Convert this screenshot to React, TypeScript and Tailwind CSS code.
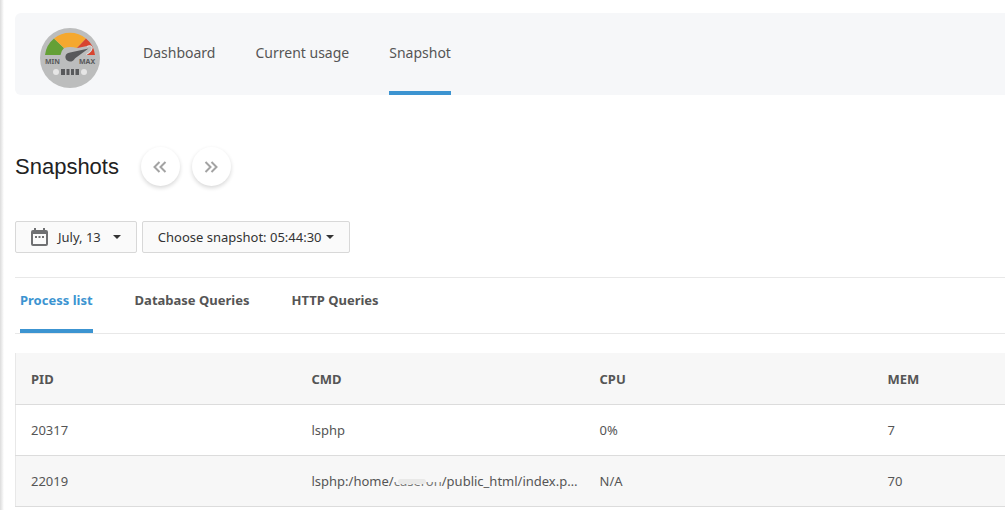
import { useState } from "react";

const NAV_ITEMS = ["Dashboard", "Current usage", "Snapshot"];
const TABS = ["Process list", "Database Queries", "HTTP Queries"];

function Gauge() {
  return (
    <svg className="size-15 shrink-0" viewBox="0 0 60 60">
      <circle cx="30" cy="30" r="30" fill="#bcbdbd" />
      <path d="M5 27A25 25 0 0 1 14 10.5L24 20Q21 23 20.500 27Z" fill="#64a036" />
      <path d="M14 10.500A25 25 0 0 1 46 10.500L37 20Q30 18 24 20Z" fill="#f5a82e" />
      <path d="M46 10.500A25 25 0 0 1 55 27H43L37 20Z" fill="#d8442f" />
      <path
        d="M52.500 20C53 17 50 17 47 18L28 22C22 24 20 29 22 33H37L48 26C51 24 52 23 52.500 20Z"
        fill="#bcbdbd"
      />
      <path d="M47 18.500C50 17 52.500 18 52 20.500S49 25 46 26.500" fill="none" stroke="#e4e0df" />
      <path
        d="M48.500 20.500L29 24.800C26 25.500 25 28 25.500 30C26 33 30 34.500 32.500 33C33.500 32.500 34.500 31 35.500 30Z"
        fill="#58595b"
      />
      <g
        className="font-['Noto_Sans','Open_Sans',sans-serif] font-bold"
        fontSize="7"
        fill="#58595b"
      >
        <text x="5" y="36">
          MIN
        </text>
        <text x="39" y="36">
          MAX
        </text>
      </g>
      <circle cx="16" cy="44" r="3" fill="#e6e6e6" />
      <circle cx="44" cy="44" r="3" fill="#e6e6e6" />
      <path d="M21 41h4v6h-4zM26.500 41h3v6h-3zM31 41h3v6h-3zM35.500 41h3.500v6h-3.500z" fill="#58595b" />
    </svg>
  );
}

function Caret() {
  return (
    <svg className="h-1 w-2" viewBox="0 0 8 4" fill="#333">
      <path d="M0 0h8L4 4z" />
    </svg>
  );
}

function CalendarIcon() {
  return (
    <svg className="h-[18px] w-[17px]" viewBox="0 0 17 18" fill="#6f7072">
      <path
        fillRule="evenodd"
        d="M2 2H3V0H5V2H12V0H14V2H15Q17 2 17 4V16Q17 18 15 18H2Q0 18 0 16V4Q0 2 2 2ZM2 6V16H15V6Z"
      />
      <path d="M4 8h2v2H4zM7.500 8h2v2h-2zM11 8h2v2h-2z" />
    </svg>
  );
}

function RoundButton({ label, path }: { label: string; path: string }) {
  return (
    <button
      type="button"
      aria-label={label}
      className="flex size-[39px] items-center justify-center rounded-full bg-white shadow-[0_2px_4px_rgba(0,0,0,0.16)]"
    >
      <svg
        className="h-3 w-[14px]"
        viewBox="0 0 14 12"
        fill="none"
        stroke="#a3a3a3"
        strokeWidth="2"
      >
        <path d={path} />
      </svg>
    </button>
  );
}

// The account name inside the path is smudged out
function MaskedCommand() {
  return (
    <>
      lsphp:/home/
      <span className="relative inline-block text-[#777]">
        caseron
        <span className="absolute inset-x-0 top-1 h-[7px] bg-[#f7f7f7]" />
        <span className="absolute right-4 left-1 top-2 h-[5px] rounded-full bg-[#e9e9e8]" />
      </span>
      /public_html/index.php
    </>
  );
}

const ROWS = [
  { pid: "20317", cmd: "lsphp", cpu: "0%", mem: "7" },
  { pid: "22019", cmd: <MaskedCommand />, cpu: "N/A", mem: "70" },
];

export default function App() {
  const [page, setPage] = useState("Snapshot");
  const [tab, setTab] = useState("Process list");

  return (
    <div className="flex min-h-screen bg-white font-['Noto_Sans','Open_Sans',sans-serif] text-[13px] leading-5 text-[#555]">
      <div className="w-1 shrink-0 bg-linear-to-r from-[#dcdcdc] to-white" />

      <div className="min-w-0 flex-1 pt-[13px] pl-[11px]">
        <header className="flex rounded-l-md bg-[#f6f7f9] pl-[25px]">
          <div className="pt-[15px] pr-[43px] pb-[7px]">
            <Gauge />
          </div>
          <nav className="flex gap-10 text-sm">
            {NAV_ITEMS.map((item) => (
              <a
                key={item}
                href="#"
                onClick={() => setPage(item)}
                className={`border-b-4 pt-[30px] ${
                  item === page ? "border-[#3c94d1]" : "border-transparent"
                }`}
              >
                {item}
              </a>
            ))}
          </nav>
        </header>

        <div className="mt-[52px] flex items-center">
          <h1 className="mr-[22px] font-['Liberation_Sans',sans-serif] text-[22px] text-[#222]">
            Snapshots
          </h1>
          <div className="flex gap-3">
            <RoundButton label="Previous snapshot" path="M6.5 1L1.5 6l5 5M12.5 1l-5 5 5 5" />
            <RoundButton label="Next snapshot" path="M1.5 1l5 5-5 5M7.5 1l5 5-5 5" />
          </div>
        </div>

        <div className="mt-[35px] flex gap-[5px] text-[#333]">
          <button
            type="button"
            className="flex h-8 items-center rounded-xs border border-[#d8d8d8] bg-[#fafafa] px-[15px]"
          >
            <CalendarIcon />
            <span className="mr-3 ml-[10px]">July, 13</span>
            <Caret />
          </button>
          <button
            type="button"
            className="flex h-8 items-center gap-1 rounded-xs border border-[#d8d8d8] bg-[#fafafa] px-[15px]"
          >
            Choose snapshot: 05:44:30
            <Caret />
          </button>
        </div>

        <div
          role="tablist"
          className="mt-6 flex gap-[42px] border-y border-[#e8e8e8] pl-[5px] font-bold"
        >
          {TABS.map((item) => (
            <button
              key={item}
              type="button"
              role="tab"
              aria-selected={item === tab}
              onClick={() => setTab(item)}
              className={`border-b-4 pt-3 pb-[19px] ${
                item === tab ? "border-[#3c94d1] text-[#3c94d1]" : "border-transparent"
              }`}
            >
              {item}
            </button>
          ))}
        </div>

        <table className="mt-[19px] w-full table-fixed border-l border-[#e8e8e8] text-left">
          <thead>
            <tr className="h-[51px] border-b border-[#dcdcdc] bg-[#f7f7f7]">
              <th className="w-[281px] pt-px pl-[15px]">PID</th>
              <th className="w-72 pt-px pl-[15px]">CMD</th>
              <th className="w-72 pt-px pl-[15px]">CPU</th>
              <th className="pt-px pl-[15px]">MEM</th>
            </tr>
          </thead>
          <tbody>
            {ROWS.map((row) => (
              <tr key={row.pid} className="h-[51px] border-b border-[#dcdcdc] even:bg-[#f7f7f7]">
                <td className="pl-[15px]">{row.pid}</td>
                <td className="truncate pr-[3px] pl-[15px]">{row.cmd}</td>
                <td className="pl-[15px]">{row.cpu}</td>
                <td className="pl-[15px]">{row.mem}</td>
              </tr>
            ))}
          </tbody>
        </table>
      </div>
    </div>
  );
}
